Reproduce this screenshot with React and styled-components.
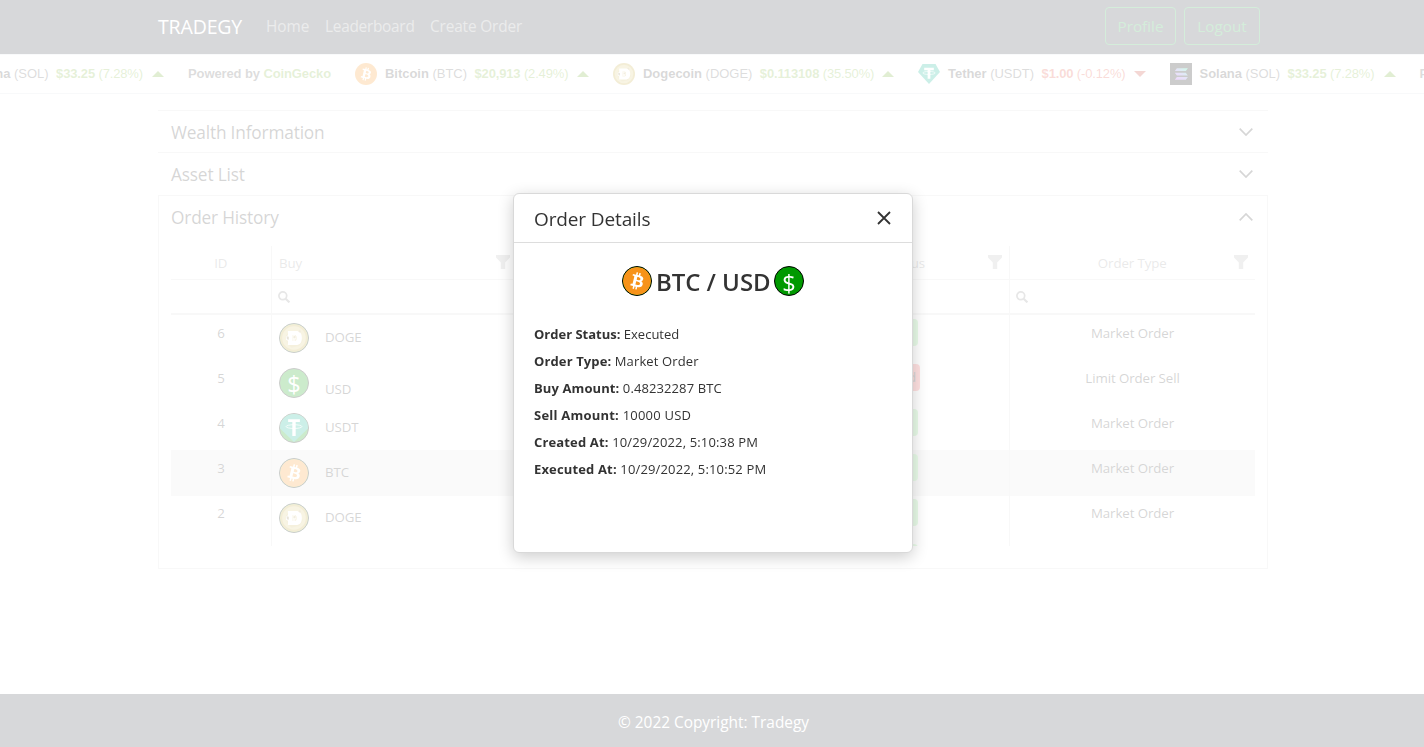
import React from "react";
import styled, { createGlobalStyle } from "styled-components";

const GlobalStyle = createGlobalStyle`
  *, *::before, *::after { box-sizing: border-box; }
  body {
    margin: 0;
    overflow: hidden;
    background: #fff;
    color: #333;
    font-family: "Open Sans", "Noto Sans", sans-serif;
  }
`;

const Page = styled.div`
  display: flex;
  flex-direction: column;
  height: 747px;
  width: 1424px;
  overflow: hidden;
`;

const Navbar = styled.header`
  display: flex;
  align-items: center;
  flex: none;
  height: 54px;
  padding: 0 164px 2px 158px;
  background: #383d45;
`;

const Brand = styled.span`
  width: 84px;
  margin-right: 24px;
  padding-top: 1px;
  color: #fff;
  font-size: 19.5px;
  letter-spacing: -0.15px;
  white-space: nowrap;
`;

const NavLinks = styled.nav`
  display: flex;
  gap: 16px;
  flex: 1;
  padding-top: 1px;
`;

const NavLink = styled.span`
  width: ${(p) => p.$width}px;
  color: rgba(255, 255, 255, 0.5);
  font-size: 15.4px;
  white-space: nowrap;
  letter-spacing: ${(p) => p.$track || 0}px;
`;

const NavButtons = styled.div`
  display: flex;
  gap: 8px;
`;

const OutlineButton = styled.button`
  width: ${(p) => p.$width}px;
  height: 38px;
  padding: 0 0 1px;
  border: 1px solid #28a745;
  border-radius: 4px;
  background: transparent;
  color: #28a745;
  font: 400 15.3px "Open Sans", sans-serif;
`;

const Ticker = styled.div`
  flex: none;
  height: 40px;
  overflow: hidden;
  border-top: 1px solid #e1e5ea;
  border-bottom: 1px solid #dcdfe3;
`;

const TickerTrack = styled.div`
  display: flex;
  align-items: center;
  gap: 24px;
  width: max-content;
  height: 38px;
  margin-left: -62px;
  font: 13px "Liberation Sans", Arial, sans-serif;
  white-space: nowrap;
`;

const TickerItem = styled.div`
  display: flex;
  align-items: center;
  width: ${(p) => p.$width}px;
  svg { flex: none; }
`;

const CoinLabel = styled.span`
  margin: 0 7.5px 2px 8px;
  color: #555;
  letter-spacing: -0.03px;
  b { color: #444; }
`;

const Price = styled.span`
  margin-bottom: 2px;
  color: ${(p) => (p.$down ? "#e15241" : "#80b640")};
  letter-spacing: -0.15px;
`;

const Arrow = styled.i`
  margin-left: auto;
  border: 6px solid transparent;
  border-top: ${(p) => (p.$down ? "6px solid #c53a2c" : "0")};
  border-bottom: ${(p) => (p.$down ? "0" : "6px solid #68a827")};
`;

const Powered = styled.span`
  width: 143px;
  margin-bottom: 2px;
  font-weight: 700;
  letter-spacing: -0.11px;
  color: #555;
  em { font-style: normal; color: #80b640; }
`;

const Accordion = styled.main`
  flex: 1;
  width: 1110px;
  margin: 16px 0 0 158px;
`;

const Panel = styled.section`
  height: ${(p) => (p.$open ? "374px" : "42.4px")};
  border: ${(p) => (p.$open ? "1px solid #ddd" : "0 solid #ddd")};
  border-top: 1px solid #ddd;
  padding: 0 ${(p) => (p.$open ? 12 : 13)}px;
`;

const PanelTitle = styled.div`
  display: flex;
  align-items: center;
  justify-content: space-between;
  height: ${(p) => (p.$tall ? 43 : 42)}px;
  padding-right: 2px;
  font-size: 17.3px;
  letter-spacing: -0.18px;
`;

const Grid = styled.div`
  width: 1084px;
  margin-top: 7px;
  font-size: 13.3px;
  letter-spacing: -0.1px;
`;

const GridRow = styled.div`
  display: grid;
  grid-template-columns: 100px 246px 246px 246px 246px;
  height: 45px;
  background: ${(p) => (p.$active ? "#e6e6e6" : "transparent")};
  box-shadow: ${(p) => (p.$active ? "0 1px 0 #e6e6e6" : "none")};
`;

const HeadRow = styled(GridRow)`
  height: 34px;
  color: #959595;
  border-bottom: 1px solid #ddd;
`;

const FilterRow = styled(GridRow)`
  height: 35px;
  border-bottom: 2px solid #ddd;
`;

const GridBody = styled.div`
  height: 231px;
  overflow: hidden;
`;

const Cell = styled.div`
  display: flex;
  align-items: flex-start;
  justify-content: ${(p) => (p.$center ? "center" : "flex-start")};
  padding: ${(p) => p.$pad || "8px 7px 0"};
  border-left: ${(p) => (p.$line ? "1px solid #ddd" : "0")};
  line-height: 20px;
`;

const HeadCell = styled(Cell)`
  align-items: center;
  padding: 2px 7.5px 0 7px;
  > span { flex: 1; text-align: ${(p) => (p.$center ? "center" : "left")}; }
  > svg { margin-left: ${(p) => (p.$center ? "-14px" : "0")}; margin-bottom: 2px; }
`;

const AssetName = styled.span`
  margin: ${(p) => (p.$low ? 11 : 4)}px 0 0 16px;
`;

const Badge = styled.span`
  width: ${(p) => (p.$bad ? 67 : 63)}px;
  height: 27px;
  border-radius: 4px;
  background: ${(p) => (p.$bad ? "#ff6b6b" : "#90ee90")};
  text-align: center;
  line-height: 26px;
  font-size: ${(p) => (p.$bad ? 13.3 : 12)}px;
  letter-spacing: ${(p) => (p.$bad ? -0.1 : -0.3)}px;
`;

const Round = styled.span`
  display: flex;
  flex: none;
  align-items: center;
  justify-content: center;
  width: 30px;
  height: 30px;
  overflow: hidden;
  border: 1px solid #000;
  border-radius: 50%;
  background: #090;
`;

const Dollar = styled.span`
  padding-top: 3px;
  color: #fff;
  font-size: 23.5px;
  font-weight: 400;
  letter-spacing: 0;
  line-height: 28px;
`;

const Footer = styled.footer`
  display: flex;
  flex: none;
  align-items: center;
  justify-content: center;
  height: 53px;
  padding: 4px 0 0 3px;
  background: #383d45;
  color: #fff;
  font-size: 15.4px;
`;

const Overlay = styled.div`
  position: fixed;
  inset: 0;
  display: flex;
  align-items: flex-start;
  justify-content: center;
  padding: 193px 0 0 2px;
  background: rgba(255, 255, 255, 0.8);
`;

const Dialog = styled.div`
  width: 400px;
  height: 360px;
  border: 1px solid #d9d9d9;
  border-radius: 6px;
  background: #fff;
  box-shadow: 0 4px 16px rgba(0, 0, 0, 0.2);
`;

const DialogHead = styled.div`
  display: flex;
  align-items: center;
  justify-content: space-between;
  height: 49px;
  padding: 1px 21px 0 20px;
  border-bottom: 1px solid #ddd;
  font-size: 19px;
  letter-spacing: -0.12px;
  svg { margin-bottom: 1px; }
`;

const PairTitle = styled.div`
  display: flex;
  align-items: center;
  justify-content: center;
  gap: 4px;
  margin-top: 23px;
  height: 30px;
  font-size: 24px;
  font-weight: 600;
  white-space: nowrap;
`;

const PairName = styled.span`
  width: 114px;
  padding-top: 1px;
  letter-spacing: -0.05px;
`;

const Details = styled.div`
  padding: 25px 20px 0;
  font-size: 13px;
  line-height: 27px;
`;

const DetailLine = styled.div`
  white-space: nowrap;
  letter-spacing: ${(p) => p.$track || 0}px;
`;

const BtcMark = ({ size }) => (
  <svg width={size} height={size} viewBox="0 0 32 32">
    <circle cx="16" cy="16" r="16" fill="#f7931a" />
    <path
      fill="#fff"
      d="M23.2 14c.3-2.1-1.300-3.200-3.500-4l.7-2.800-1.700-.4-.7 2.700-1.400-.3.7-2.800-1.700-.4-.7 2.800-3.500-.9-.5 1.800s1.300.3 1.200.3c.7.2.8.6.8 1l-1.900 7.800c-.1.200-.3.500-.8.400l-1.200-.3-.8 2 3.300.8-.7 2.900 1.700.4.7-2.800 1.400.3-.7 2.800 1.700.4.7-2.800c2.900.5 5.100.3 6-2.300.7-2.100 0-3.300-1.500-4.100 1.100-.3 1.900-1 2.100-2.500zm-3.800 5.400c-.5 2.100-4 1-5.200.7l.9-3.700c1.200.3 4.800.8 4.300 3zm.5-5.400c-.5 1.900-3.400.9-4.300.7l.8-3.400c1 .200 4 .7 3.500 2.700z"
    />
  </svg>
);

const DogeMark = ({ size }) => (
  <svg width={size} height={size} viewBox="0 0 32 32">
    <circle cx="16" cy="16" r="16" fill="#c2a633" />
    <circle cx="16" cy="16" r="13.500" fill="#d9c676" />
    <path fill="#cdb658" d="M7 13l3-5 3 3 6-1 4-4 1 7 2 6-4 6-9 2-5-5z" />
    <path
      fill="#fff"
      fillRule="evenodd"
      d="M9 8h9c5 0 7 3 7 8s-2 8-7 8H9v-5l-2-1v-4l2-1zm5 4.500v7h2.500c2 0 2.500-1.500 2.500-3.500s-.5-3.500-2.500-3.500z"
    />
    <path fill="#8f7c4a" d="M7.500 14l2.500.5v3.500l-2-.5z" />
    <path fill="#f3ecd0" d="M14 12.500h3l1.500 3.500-1.500 3.500h-3z" />
    <circle cx="16.500" cy="15" r="1.200" fill="#b7a164" />
    <circle cx="22.500" cy="8.500" r="1.200" fill="#b7a164" />
  </svg>
);

const TetherMark = ({ size }) => (
  <svg width={size} height={size} viewBox="0 0 32 32">
    <path fill="#00b08b" d="M6.500 1.500h19L32 13 16 30.500 0 13z" />
    <path fill="#fff" d="M9 7h14v3.500h-5V23h-4V10.500H9z" />
    <ellipse cx="16" cy="14.500" rx="9" ry="2.200" fill="none" stroke="#fff" strokeWidth="1" />
  </svg>
);

const TetherCoin = () => (
  <svg width="28" height="28" viewBox="0 0 30 30">
    <path fill="#00b08b" d="M0 0h30v15.500L15 30 0 15.500z" />
    <path fill="#fff" d="M8.700 5.500h12.600v3h-4.500V23.500h-3.600V8.500H8.700z" />
    <ellipse cx="15" cy="13.500" rx="8.500" ry="2" fill="none" stroke="#fff" strokeWidth=".8" />
  </svg>
);

const SolanaMark = ({ size }) => (
  <svg width={size} height={size} viewBox="0 0 32 32">
    <defs>
      <linearGradient id="sol" x1="0" y1="1" x2="1" y2="0">
        <stop offset="0" stopColor="#b23cf5" />
        <stop offset=".5" stopColor="#7f78dd" />
        <stop offset="1" stopColor="#14f195" />
      </linearGradient>
    </defs>
    <path fill="#000" d="M0 0h32v32H0z" />
    <path
      fill="url(#sol)"
      d="M10 7.500h16l-3 4H7zM7 14h16l3 4H10zM10 20.500h16l-3 4H7z"
    />
  </svg>
);

const Chevron = ({ up }) => (
  <svg width="14" height="8" viewBox="0 0 14 8">
    <path d={up ? "M.7 7.300L7 1l6.300 6.300" : "M.7.7L7 7 13.300.7"} fill="none" stroke="#333" strokeWidth="1.700" />
  </svg>
);

const FilterIcon = () => (
  <svg width="14" height="14" viewBox="0 0 14 14">
    <path d="M0 0h14v2.500L9.200 7.500V14H4.800V7.500L0 2.500z" fill="#b4b4b4" />
  </svg>
);

const SearchIcon = () => (
  <svg width="12" height="12" viewBox="0 0 12 12">
    <circle cx="4.800" cy="4.800" r="3.900" fill="none" stroke="#858585" strokeWidth="1.700" />
    <path d="M7.700 7.700l3.700 3.700" stroke="#858585" strokeWidth="2.100" />
  </svg>
);

const CloseIcon = () => (
  <svg width="14" height="14" viewBox="0 0 14 14">
    <path d="M1 1l12 12M13 1L1 13" stroke="#333" strokeWidth="1.800" />
  </svg>
);

const Coin = ({ code }) => (
  <Round>
    {code === "BTC" && <BtcMark size={28} />}
    {code === "DOGE" && <DogeMark size={28} />}
    {code === "USDT" && <TetherCoin />}
    {code === "USD" && <Dollar>$</Dollar>}
  </Round>
);

const quotes = {
  btc: { name: "Bitcoin", code: "BTC", price: "$20,913", change: "2.49%", width: 234, Mark: BtcMark },
  doge: { name: "Dogecoin", code: "DOGE", price: "$0.113108", change: "35.50%", width: 281, Mark: DogeMark },
  usdt: { name: "Tether", code: "USDT", price: "$1.00", change: "-0.12%", width: 227.5, down: true, Mark: TetherMark },
  sol: { name: "Solana", code: "SOL", price: "$33.25", change: "7.28%", width: 226, Mark: SolanaMark },
};

const Quote = ({ q }) => (
  <TickerItem $width={q.width}>
    <q.Mark size={22} />
    <CoinLabel>
      <b>{q.name}</b> ({q.code})
    </CoinLabel>
    <Price $down={q.down}>
      <b>{q.price}</b> ({q.change})
    </Price>
    <Arrow $down={q.down} />
  </TickerItem>
);

const PoweredBy = () => (
  <Powered>
    Powered by <em>CoinGecko</em>
  </Powered>
);

const orders = [
  { id: 6, buy: "DOGE", status: "Executed", type: "Market Order" },
  { id: 5, buy: "USD", status: "Cancelled", type: "Limit Order Sell" },
  { id: 4, buy: "USDT", status: "Executed", type: "Market Order" },
  { id: 3, buy: "BTC", status: "Executed", type: "Market Order" },
  { id: 2, buy: "DOGE", status: "Executed", type: "Market Order" },
];

const details = [
  { label: "Order Status:", value: "Executed", track: 0 },
  { label: "Order Type:", value: "Market Order", track: 0.12 },
  { label: "Buy Amount:", value: "0.48232287 BTC", track: 0.1 },
  { label: "Sell Amount:", value: "10000 USD", track: 0.22 },
  { label: "Created At:", value: "10/29/2022, 5:10:38 PM", track: 0.15 },
  { label: "Executed At:", value: "10/29/2022, 5:10:52 PM", track: 0.15 },
];

export default function App() {
  return (
    <>
      <GlobalStyle />
      <Page>
        <Navbar>
          <Brand>TRADEGY</Brand>
          <NavLinks>
            <NavLink $width={43}>Home</NavLink>
            <NavLink $width={89} $track={-0.27}>Leaderboard</NavLink>
            <NavLink $width={92} $track={-0.15}>Create Order</NavLink>
          </NavLinks>
          <NavButtons>
            <OutlineButton $width={71}>Profile</OutlineButton>
            <OutlineButton $width={76}>Logout</OutlineButton>
          </NavButtons>
        </Navbar>
        <Ticker>
          <TickerTrack>
            <Quote q={quotes.sol} />
            <PoweredBy />
            <Quote q={quotes.btc} />
            <Quote q={quotes.doge} />
            <Quote q={quotes.usdt} />
            <Quote q={quotes.sol} />
            <PoweredBy />
          </TickerTrack>
        </Ticker>
        <Accordion>
          <Panel>
            <PanelTitle>Wealth Information <Chevron /></PanelTitle>
          </Panel>
          <Panel>
            <PanelTitle>Asset List <Chevron /></PanelTitle>
          </Panel>
          <Panel $open>
            <PanelTitle $tall>Order History <Chevron up /></PanelTitle>
            <Grid>
              <HeadRow>
                <HeadCell $center><span>ID</span></HeadCell>
                <HeadCell $line><span>Buy</span><FilterIcon /></HeadCell>
                <HeadCell $line><span /><FilterIcon /></HeadCell>
                <HeadCell $line $center><span>Order Status</span><FilterIcon /></HeadCell>
                <HeadCell $line $center><span>Order Type</span><FilterIcon /></HeadCell>
              </HeadRow>
              <FilterRow>
                <Cell />
                {[0, 1, 2, 3].map((n) => (
                  <Cell key={n} $line $pad="11px 6px 0"><SearchIcon /></Cell>
                ))}
              </FilterRow>
              <GridBody>
                {orders.map((o) => (
                  <GridRow key={o.id} $active={o.id === 3}>
                    <Cell $center>{o.id}</Cell>
                    <Cell $line>
                      <Coin code={o.buy} />
                      <AssetName $low={o.buy === "USD"}>{o.buy}</AssetName>
                    </Cell>
                    <Cell $line />
                    <Cell $line $center $pad="4px 7px 0">
                      <Badge $bad={o.status === "Cancelled"}>{o.status}</Badge>
                    </Cell>
                    <Cell $line $center>{o.type}</Cell>
                  </GridRow>
                ))}
                <GridRow>
                  <Cell />
                  <Cell $line />
                  <Cell $line />
                  <Cell $line $center $pad="4px 7px 0"><Badge /></Cell>
                  <Cell $line />
                </GridRow>
              </GridBody>
            </Grid>
          </Panel>
        </Accordion>
        <Footer>© 2022 Copyright: Tradegy</Footer>
      </Page>
      <Overlay>
        <Dialog role="dialog">
          <DialogHead>Order Details <CloseIcon /></DialogHead>
          <PairTitle>
            <Coin code="BTC" />
            <PairName>BTC / USD</PairName>
            <Coin code="USD" />
          </PairTitle>
          <Details>
            {details.map((d) => (
              <DetailLine key={d.label} $track={d.track}>
                <b>{d.label}</b> {d.value}
              </DetailLine>
            ))}
          </Details>
        </Dialog>
      </Overlay>
    </>
  );
}
